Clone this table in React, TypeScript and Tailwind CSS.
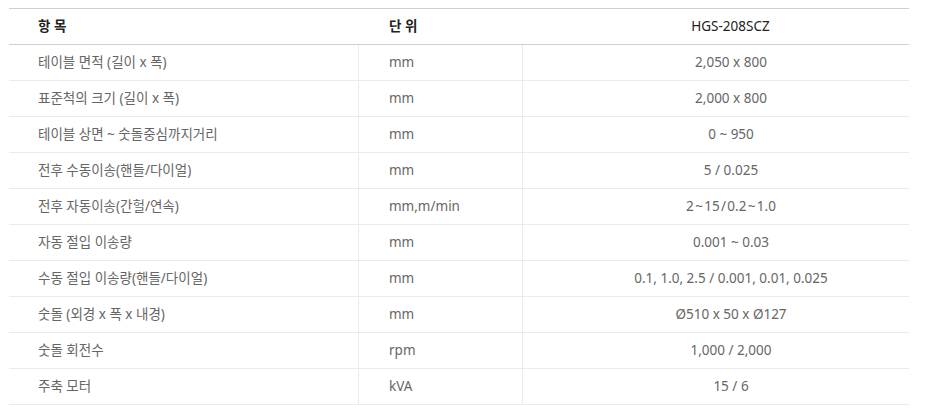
import React from "react";

const rows: [string, string, string][] = [
  ["테이블 면적 (길이 x 폭)", "mm", "2,050 x 800"],
  ["표준척의 크기 (길이 x 폭)", "mm", "2,000 x 800"],
  ["테이블 상면 ~ 숫돌중심까지거리", "mm", "0 ~ 950"],
  ["전후 수동이송(핸들/다이얼)", "mm", "5 / 0.025"],
  ["전후 자동이송(간헐/연속)", "mm,m/min", "2\u200A~\u200A15\u200A/\u200A0.2\u200A~\u200A1.0"],
  ["자동 절입 이송량", "mm", "0.001 ~ 0.03"],
  ["수동 절입 이송량(핸들/다이얼)", "mm", "0.1, 1.0, 2.5 / 0.001, 0.01, 0.025"],
  ["숫돌 (외경 x 폭 x 내경)", "mm", "Ø510 x 50 x Ø127"],
  ["숫돌 회전수", "rpm", "1,000 / 2,000"],
  ["주축 모터", "kVA", "15 / 6"],
];

export default function App() {
  return (
    <div
      className="w-[926px] h-[418px] bg-white pt-[8px] pl-[9px]"
      style={{ fontFamily: '"Noto Sans", "Noto Sans CJK KR", sans-serif' }}
    >
      <div className="w-[900px]">
        <div className="grid grid-cols-[349px_164px_387px] h-[37px] border-t border-b border-[#cfcfcf] text-[13.5px] text-[#222] items-center">
          <div className="pl-[29px] font-bold">항 목</div>
          <div className="pl-[31px] font-bold">단 위</div>
          <div className="pl-[30px] text-center">HGS-208SCZ</div>
        </div>
        {rows.map((r, i) => (
          <div
            key={i}
            className="grid grid-cols-[349px_164px_387px] h-[36px] border-b border-[#ebebeb] text-[13.5px] text-[#666]"
          >
            <div className="pl-[29px] flex items-center">{r[0]}</div>
            <div className="pl-[30px] flex items-center border-l border-[#ebebeb]">{r[1]}</div>
            <div className="pl-[30px] flex items-center justify-center border-l border-[#ebebeb]">{r[2]}</div>
          </div>
        ))}
      </div>
    </div>
  );
}
